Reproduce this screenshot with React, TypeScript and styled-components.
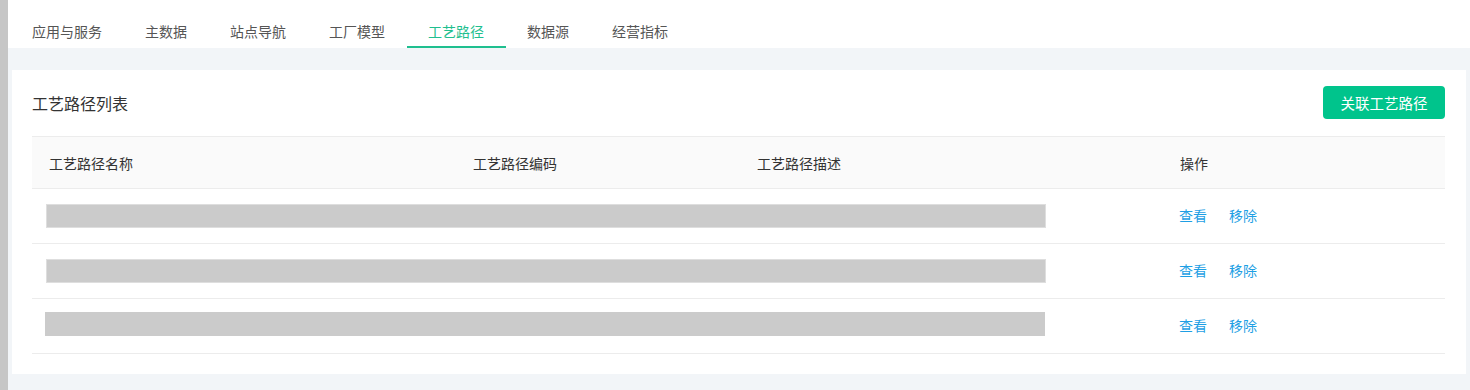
import React, { useState } from 'react';
import styled, { createGlobalStyle } from 'styled-components';

const GlobalStyle = createGlobalStyle`
  html, body {
    margin: 0;
    padding: 0;
    background: #ffffff;
  }
  body {
    font-family: 'Noto Sans CJK SC', 'Noto Sans', 'Liberation Sans', sans-serif;
    color: #333333;
  }
  * { box-sizing: border-box; }
`;

const Page = styled.div`
  display: flex;
  min-height: 390px;
`;

const LeftRail = styled.div`
  width: 8px;
  flex: 0 0 8px;
  background: #c6c6c6;
`;

const Main = styled.div`
  flex: 1;
  display: flex;
  flex-direction: column;
  background: #f2f5f8;
`;

const TabBar = styled.nav`
  display: flex;
  height: 48px;
  padding-left: 2.5px;
  background: #ffffff;
`;

interface TabProps {
  $active: boolean;
}

const Tab = styled.div<TabProps>`
  height: 48px;
  padding: 20px 21.5px 0;
  font-size: 14px;
  line-height: 22px;
  color: ${(p: TabProps) => (p.$active ? '#1fbf8f' : '#555555')};
  border-bottom: 2px solid ${(p: TabProps) => (p.$active ? '#1fbf8f' : 'transparent')};
  cursor: pointer;
  white-space: nowrap;
`;

const Content = styled.div`
  padding: 22px 4px 16px;
`;

const Card = styled.section`
  background: #ffffff;
  padding: 16px 21px 20px 20px;
`;

const CardHeader = styled.div`
  display: flex;
  align-items: center;
  justify-content: space-between;
  height: 33px;
  margin-bottom: 17px;
`;

const Title = styled.h2`
  margin: 0;
  font-size: 16px;
  line-height: 22px;
  font-weight: normal;
  color: #333333;
`;

const PrimaryButton = styled.button`
  height: 33px;
  width: 122px;
  padding: 0;
  border: none;
  border-radius: 4px;
  background: #00c48c;
  color: #ffffff;
  font-family: inherit;
  font-size: 14.5px;
  cursor: pointer;
`;

const Table = styled.table`
  width: 1413px;
  border-collapse: collapse;
  table-layout: fixed;
  font-size: 14px;
`;

const HeadRow = styled.tr`
  background: #fafafa;
  border-top: 1px solid #ececec;
  border-bottom: 1px solid #ececec;
`;

const Th = styled.th`
  height: 52px;
  padding: 0 0 0 17px;
  text-align: left;
  font-weight: normal;
  color: #333333;
`;

const BodyRow = styled.tr`
  border-bottom: 1px solid #ececec;
`;

const Td = styled.td`
  height: 55px;
  padding: 0 0 0 14px;
  vertical-align: middle;
`;

const ActionCell = styled.td`
  height: 55px;
  padding: 0 0 2px 16px;
  vertical-align: middle;
`;

interface BarProps {
  $bordered: boolean;
  $nudge: number;
}

const SkeletonBar = styled.div<BarProps>`
  width: 1000px;
  height: 24px;
  background: #cbcbcb;
  border: ${(p: BarProps) => (p.$bordered ? '1px solid #dedede' : 'none')};
  transform: translate(${(p: BarProps) => p.$nudge}px, ${(p: BarProps) => p.$nudge * 2}px);
`;

const Actions = styled.div`
  display: flex;
  gap: 22px;
  line-height: 20px;
`;

const LinkButton = styled.a`
  color: #1e9fe4;
  font-size: 14px;
  cursor: pointer;
  text-decoration: none;
`;

const tabs = ['应用与服务', '主数据', '站点导航', '工厂模型', '工艺路径', '数据源', '经营指标'];

const rows = [
  { id: 1, bordered: true, nudge: 0 },
  { id: 2, bordered: true, nudge: 0 },
  { id: 3, bordered: false, nudge: -1 },
];

const App: React.FC = () => {
  const [active, setActive] = useState('工艺路径');

  return (
    <Page>
      <GlobalStyle />
      <LeftRail />
      <Main>
        <TabBar>
          {tabs.map((t) => (
            <Tab key={t} $active={t === active} onClick={() => setActive(t)}>
              {t}
            </Tab>
          ))}
        </TabBar>
        <Content>
          <Card>
            <CardHeader>
              <Title>工艺路径列表</Title>
              <PrimaryButton>关联工艺路径</PrimaryButton>
            </CardHeader>
            <Table>
              <colgroup>
                <col style={{ width: 424 }} />
                <col style={{ width: 284 }} />
                <col style={{ width: 423 }} />
                <col style={{ width: 282 }} />
              </colgroup>
              <thead>
                <HeadRow>
                  <Th>工艺路径名称</Th>
                  <Th>工艺路径编码</Th>
                  <Th>工艺路径描述</Th>
                  <Th>操作</Th>
                </HeadRow>
              </thead>
              <tbody>
                {rows.map((r) => (
                  <BodyRow key={r.id}>
                    <Td colSpan={3}>
                      <SkeletonBar $bordered={r.bordered} $nudge={r.nudge} />
                    </Td>
                    <ActionCell>
                      <Actions>
                        <LinkButton>查看</LinkButton>
                        <LinkButton>移除</LinkButton>
                      </Actions>
                    </ActionCell>
                  </BodyRow>
                ))}
              </tbody>
            </Table>
          </Card>
        </Content>
      </Main>
    </Page>
  );
};

export default App;
